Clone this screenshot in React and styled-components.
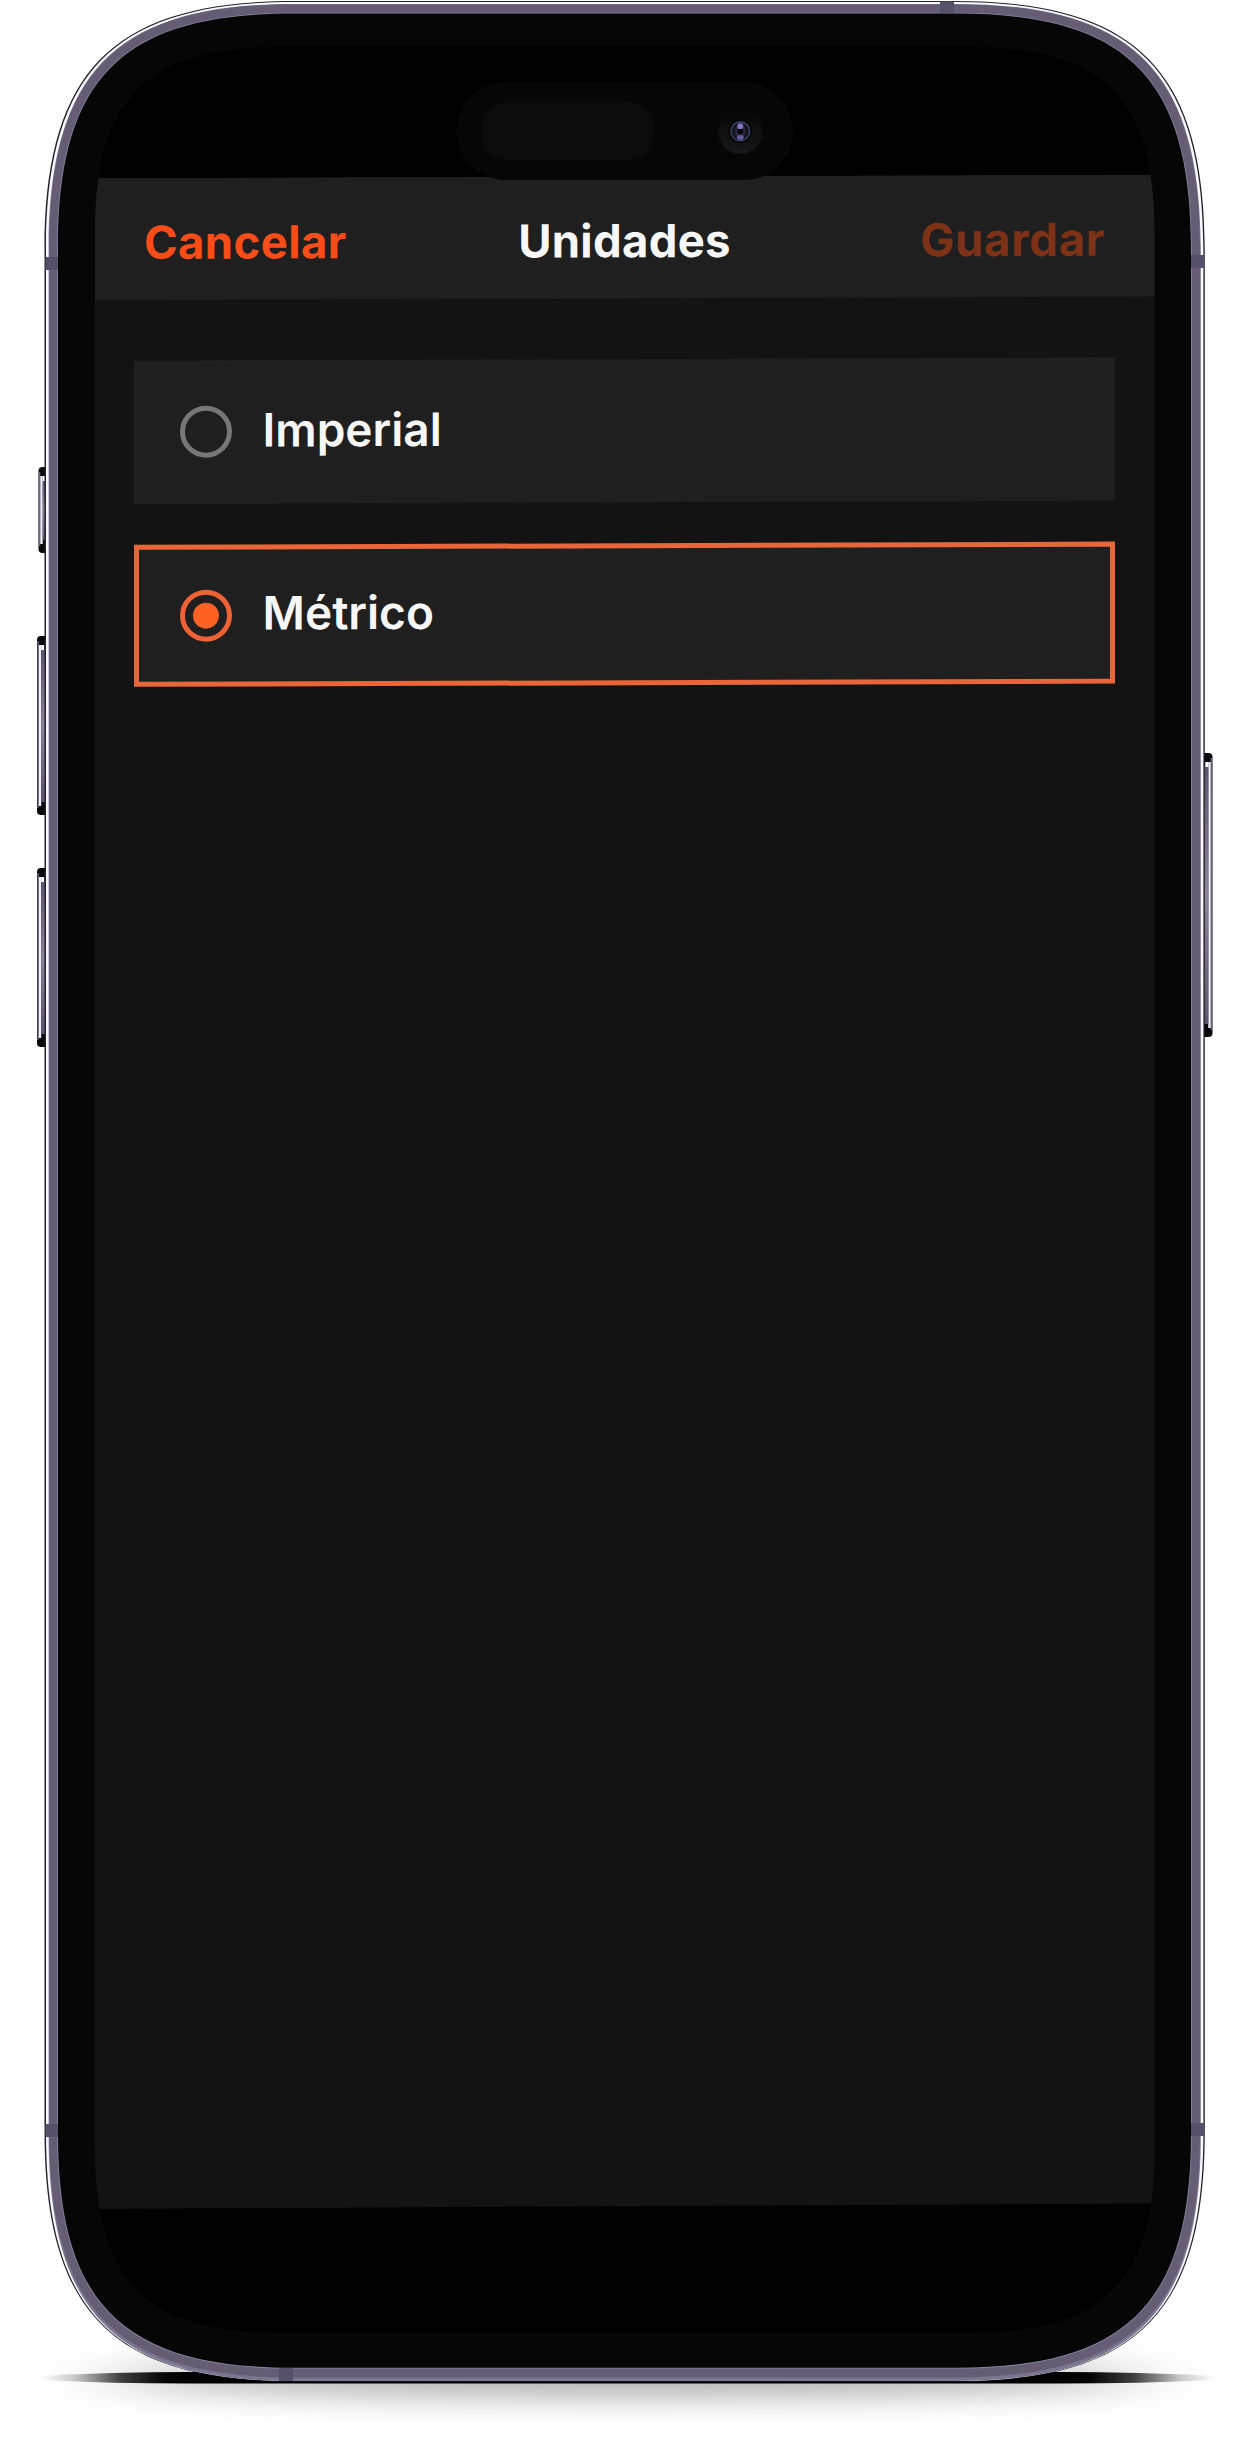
import React from "react";
import styled, { createGlobalStyle } from "styled-components";

const GlobalStyle = createGlobalStyle`
  body {
    margin: 0;
    background: #fff;
    font-family: Inter, "Liberation Sans", sans-serif;
  }
`;

const Stage = styled.div`
  position: relative;
  box-sizing: border-box;
  width: 1253px;
  height: 2464px;
  padding: 47px 98px 131px 94px;
  overflow: hidden;
  background: #fff;
`;

const Display = styled.main`
  box-sizing: border-box;
  height: 2286px;
  padding-top: 131px;
  overflow: hidden;
  background: #000;
  border-radius: 130px;
`;

const Screen = styled.div`
  height: 2031px;
  background: #131313;
  transform: skewY(-0.19deg);
  transform-origin: 0 0;
  clip-path: polygon(0 0, 100% 0, 100% calc(100% - 2px), 0 100%);
`;

const Header = styled.header`
  box-sizing: border-box;
  display: grid;
  grid-template-columns: 1fr auto 1fr;
  align-items: center;
  height: 122px;
  padding: 7px 50px 0;
  background: #1f1f1f;
`;

const Action = styled.button`
  justify-self: ${(props) => (props.$end ? "end" : "start")};
  padding: 0;
  border: 0;
  background: none;
  color: ${(props) => (props.$muted ? "#7d3218" : "#fa4d1a")};
  font: inherit;
  font-size: 45.5px;
  line-height: 56px;
  font-weight: 700;
  letter-spacing: ${(props) => (props.$end ? "0.7px" : "0.4px")};
`;

const Title = styled.h1`
  margin: 0;
  color: #f7f7f7;
  font-size: 45.5px;
  line-height: 56px;
  font-weight: 700;
  letter-spacing: 0.3px;
`;

const Options = styled.div`
  display: flex;
  flex-direction: column;
  gap: 41px;
  padding: 61px 40px 0;
`;

const Option = styled.label`
  box-sizing: border-box;
  display: flex;
  align-items: center;
  gap: 31px;
  height: 142.5px;
  padding-left: 40.5px;
  background: #1f1f1f;
  border: 5px solid ${(props) => (props.$checked ? "#e8663a" : "#1f1f1f")};
`;

const Radio = styled.span`
  box-sizing: border-box;
  display: flex;
  align-items: center;
  justify-content: center;
  width: 52px;
  height: 52px;
  border: 5px solid ${(props) => (props.$checked ? "#ee6236" : "#777")};
  border-radius: 50%;
`;

const Dot = styled.span`
  width: 26px;
  height: 26px;
  border-radius: 50%;
  background: #ff6224;
`;

const Label = styled.span`
  padding-bottom: 5px;
  color: #f7f7f7;
  font-size: 46px;
  line-height: 56px;
  font-weight: 600;
`;

const Hardware = styled.svg`
  position: absolute;
  top: 0;
  left: 0;
  pointer-events: none;
`;

// Closed path with continuous-curvature corners; a is how far each corner reaches.
const shell = (l, t, r, b, a) => {
  const k = a * 0.275;
  return [
    `M${l} ${t + a}`,
    `C${l} ${t + k} ${l + k} ${t} ${l + a} ${t}`,
    `H${r - a}`,
    `C${r - k} ${t} ${r} ${t + k} ${r} ${t + a}`,
    `V${b - a}`,
    `C${r} ${b - k} ${r - k} ${b} ${r - a} ${b}`,
    `H${l + a}`,
    `C${l + k} ${b} ${l} ${b - k} ${l} ${b - a}`,
    "Z",
  ].join("");
};

const screenHole = shell(95, 47, 1154.7, 2333, 186);

// The metal layers stop under the bezel, so only the bezel meets the screen edge.
const metalHole = shell(72, 28, 1177, 2353, 218);

const metal = (l, t, r, b, a) => shell(l, t, r, b, a) + metalHole;

const SideButton = ({ x, y, height, flip }) => (
  <g transform={`translate(${x} ${y})${flip ? " scale(-1 1)" : ""}`}>
    <rect width="14" height={height} rx="4" fill="#08070c" />
    <rect x="0.4" y="5" width="1.4" height={height - 12} fill="#6b6777" />
    <rect x="1.8" y="9" width="2.4" height={height - 18} fill="#f4f1ff" />
    <rect x="4.2" y="9" width="3" height="6" fill="#fff" />
    <rect x="4.2" y="14" width="5" height={height - 27} fill="url(#button)" />
  </g>
);

const Phone = () => (
  <Hardware width="1253" height="2464" viewBox="0 0 1253 2464">
    <defs>
      <linearGradient id="button" x1="0" y1="0" x2="0" y2="1">
        <stop offset="0" stopColor="#5c5570" />
        <stop offset="0.5" stopColor="#8b849b" />
        <stop offset="1" stopColor="#5c5570" />
      </linearGradient>
      <linearGradient id="contact" x1="0" y1="0" x2="1" y2="0">
        <stop offset="0" stopColor="#000" stopOpacity="0" />
        <stop offset="0.03" stopColor="#000" stopOpacity="0.2" />
        <stop offset="0.07" stopColor="#000" stopOpacity="0.75" />
        <stop offset="0.11" stopColor="#000" />
        <stop offset="0.89" stopColor="#000" />
        <stop offset="0.93" stopColor="#000" stopOpacity="0.75" />
        <stop offset="0.97" stopColor="#000" stopOpacity="0.2" />
        <stop offset="1" stopColor="#000" stopOpacity="0" />
      </linearGradient>
      <filter id="soften" x="-20%" y="-300%" width="140%" height="700%">
        <feGaussianBlur stdDeviation="50 16" />
      </filter>
      <linearGradient id="lensRim" x1="0" y1="0" x2="0" y2="1">
        <stop offset="0" stopColor="#050505" />
        <stop offset="1" stopColor="#18181a" />
      </linearGradient>
    </defs>

    <ellipse cx="625" cy="2378" rx="520" ry="16" fill="#000" opacity="0.38" filter="url(#soften)" />
    <path
      d="M40 2376Q110 2372 190 2372H1060Q1140 2372 1215 2376V2380Q1140 2383.5 1060 2383.5H190Q110 2383.5 40 2380Z"
      fill="url(#contact)"
    />

    <SideButton x={38.5} y={467} height={86} />
    <SideButton x={37} y={636} height={179} />
    <SideButton x={37} y={868} height={179} />
    <SideButton x={1212.5} y={753} height={284} flip />

    <g fillRule="evenodd">
      <path d={metal(44.5, 1, 1204.8, 2381.5, 250)} fill="#24222b" />
      <path d={metal(46, 2, 1203.4, 2381, 248.5)} fill="#fbf9ff" />
      <path d={metal(48.6, 3.9, 1200.8, 2381, 246)} fill="#7c7590" />
      <path d={metal(49.4, 4.4, 1200, 2377.5, 245)} fill="#645d74" />
      <path d={metal(57.2, 12.8, 1191.8, 2368.6, 235)} fill="#8d86a2" />
      <path d={shell(58, 13.6, 1191, 2367.7, 234) + screenHole} fill="#060606" />
    </g>

    <g fill="#57506a">
      <rect x="940" y="1.5" width="14" height="11.5" />
      <rect x="279" y="2368" width="14" height="13" />
      <rect x="45.5" y="257" width="12.5" height="13" />
      <rect x="1191" y="255" width="13.5" height="13" />
      <rect x="45.5" y="2124" width="12.5" height="13" />
      <rect x="1191" y="2123" width="13.5" height="13" />
    </g>

    <rect x="456.5" y="82" width="336.5" height="98" rx="49" fill="#060606" />
    <rect x="480.5" y="101" width="174" height="60" rx="30" fill="#0b0b0b" />
    <circle cx="740.3" cy="131.5" r="22.3" fill="url(#lensRim)" />
    <circle cx="740.3" cy="131.3" r="11.5" fill="#020203" />
    <circle cx="740.3" cy="131.3" r="9.4" fill="#16151f" stroke="#2f4262" strokeWidth="1.6" />
    <ellipse cx="740.3" cy="131.3" rx="5" ry="7" fill="#2d2945" />
    <circle cx="740.3" cy="131.3" r="3" fill="#020203" />
    <circle cx="740.3" cy="126.2" r="2.9" fill="#8176c4" />
    <ellipse cx="740.3" cy="137.5" rx="3.4" ry="2.4" fill="#655ca0" />
  </Hardware>
);

const options = [
  { id: "imperial", name: "Imperial" },
  { id: "metric", name: "Métrico" },
];

const App = () => {
  const selected = "metric";

  return (
    <>
      <GlobalStyle />
      <Stage>
        <Display>
          <Screen>
            <Header>
              <Action>Cancelar</Action>
              <Title>Unidades</Title>
              <Action $end $muted>
                Guardar
              </Action>
            </Header>
            <Options>
              {options.map((option) => (
                <Option key={option.id} $checked={option.id === selected}>
                  <Radio $checked={option.id === selected}>
                    {option.id === selected && <Dot />}
                  </Radio>
                  <Label>{option.name}</Label>
                </Option>
              ))}
            </Options>
          </Screen>
        </Display>
        <Phone />
      </Stage>
    </>
  );
};

export default App;
